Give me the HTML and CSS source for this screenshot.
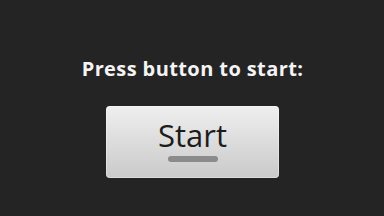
FILE: index.html
```html
<!DOCTYPE html>
<html lang="en">
<head>
    <meta charset="UTF-8">
    <meta name="viewport" content="width=device-width, initial-scale=1.0">
    <title>Start</title>
    <link rel="stylesheet" href="styles.css">
</head>
<body>
    <div class="screen">
        <div class="prompt">Press button to start:</div>
        <button class="start-btn">
            <span class="start-label">Start</span>
            <span class="indicator"></span>
        </button>
    </div>
</body>
</html>
```

FILE: styles.css
```css
body {
    margin: 0;
    width: 384px;
    height: 216px;
    overflow: hidden;
    background: #242424;
    font-family: 'Open Sans', 'Noto Sans', sans-serif;
}

.screen {
    display: flex;
    flex-direction: column;
    align-items: center;
    padding-top: 56px;
}

.prompt {
    color: #f4f4f4;
    font-weight: bold;
    font-size: 20px;
    line-height: 26px;
    letter-spacing: 0.4px;
    margin-left: 1px;
}

.start-btn {
    margin-top: 24px;
    width: 173px;
    height: 72px;
    border: none;
    border-radius: 4px;
    background: linear-gradient(180deg, #efefef 0%, #dedede 45%, #cacaca 100%);
    box-shadow: inset 0 0 0 1px rgba(255, 255, 255, 0.35);
    display: flex;
    flex-direction: column;
    align-items: center;
    padding: 10px 0 0;
    font-family: inherit;
    margin-left: 1px;
}

.start-label {
    color: #1c1c1c;
    font-size: 31px;
    line-height: 38px;
}

.indicator {
    margin-top: 2px;
    width: 50px;
    height: 6px;
    border-radius: 3px;
    background: #8b8b8b;
}
```
